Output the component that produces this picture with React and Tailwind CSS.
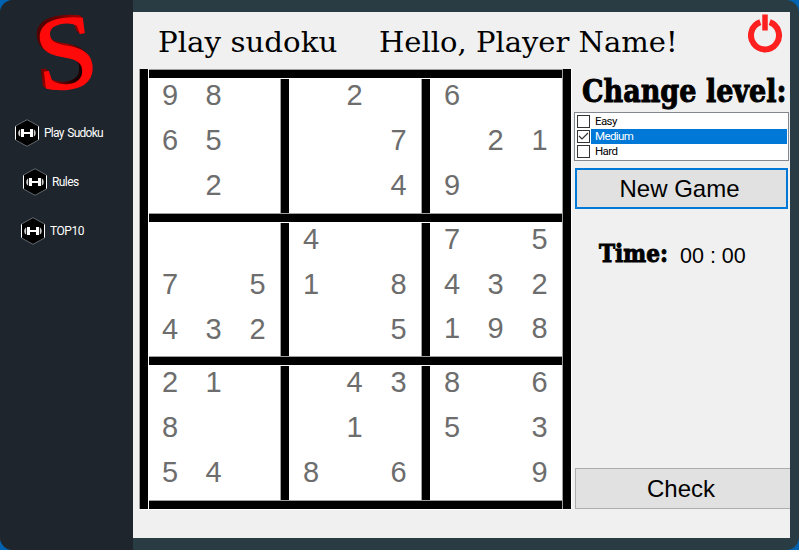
import React from 'react';

const rows = [
  ['98  2 6  ', '65   7 21', ' 2   49  '],
  ['   4  7 5', '7 51 8432', '432  5198'],
  ['21  438 6', '8   1 5 3', '54 8 6  9'],
];

const Block = ({ cells, compact }) => (
  <div
    className={`grid w-[131px] grid-cols-[42px_45px_43px] content-start text-[29px] leading-[32px] text-[#6d6d6d] ${
      compact ? 'grid-rows-[45px_44px_44px]' : 'auto-rows-[45px]'
    }`}
  >
    {cells.map((c, i) => (
      <span key={i} className="text-center">{c.trim()}</span>
    ))}
  </div>
);

const VBar = () => <div className="w-[9px] shrink-0 border-l border-[#a0a0a0] bg-black" />;
const HBar = () => <div className="mb-px h-[9px] shrink-0 border-t border-[#a0a0a0] bg-black" />;

const Board = () => (
  <div className="flex h-[441px] w-[433px] bg-white pb-px">
    <VBar />
    <div className="ml-px flex w-[413px] flex-col">
      <HBar />
      {rows.map((band, b) => (
        <React.Fragment key={b}>
          <div className={b === 1 ? 'flex h-[133px]' : 'flex h-[134px]'}>
            {[0, 3, 6].map((s) => (
              <React.Fragment key={s}>
                {s > 0 && <div className="mr-px flex"><VBar /></div>}
                <Block
                  cells={band.flatMap((r) => r.slice(s, s + 3).split(''))}
                  compact={b === 1 && s === 6}
                />
              </React.Fragment>
            ))}
          </div>
          <HBar />
        </React.Fragment>
      ))}
    </div>
    <VBar />
  </div>
);

const Logo = () => (
  <svg className="block h-[110px] w-[133px] overflow-visible" viewBox="0 0 133 110" role="img">
    <defs>
      <linearGradient id="side" x1="0" y1="0" x2="1" y2="1">
        <stop offset="0" stopColor="#300000" />
        <stop offset=".35" stopColor="#6a0000" />
        <stop offset=".5" stopColor="#a00000" />
        <stop offset=".7" stopColor="#180000" />
        <stop offset="1" stopColor="#700000" />
      </linearGradient>
    </defs>
    {[5, 4, 3, 2, 1, 0].map((d) => (
      <text
        key={d}
        transform={`translate(${39.5 - d * 0.6} ${91.5 - d * 0.5}) rotate(-7) scale(1.06 1)`}
        fontFamily="Liberation Serif, serif"
        fontSize="105"
        fill={d ? 'url(#side)' : '#ff0a0a'}
        stroke={d ? 'url(#side)' : '#ff0a0a'}
        strokeWidth="1.5"
      >
        S
      </text>
    ))}
  </svg>
);

const Dumbbell = () => (
  <svg className="h-7 w-6 shrink-0" viewBox="0 0 24 28">
    <path d="M12 .7 23.5 7v14L12 27.3.5 21V7Z" fill="#000" stroke="#777e83" strokeWidth=".8" />
    <path d="M.5 7.5v13M23.5 7.5v13" stroke="#fff" />
    <path d="M8 13h8v2H8zM6 10h3v8H6zM15 10h3v8h-3z" fill="#fff" />
    <path d="M5.2 10.5v7c-2.6-1-2.6-6 0-7M18.8 10.5v7c2.6-1 2.6-6 0-7" fill="#ccc" />
  </svg>
);

const NavItem = ({ label, className }) => (
  <div className={`flex h-[49px] items-start gap-[5px] text-[12px] leading-[28px] whitespace-nowrap text-white ${className}`}>
    <Dumbbell />
    <span>{label}</span>
  </div>
);

const Level = ({ label, checked }) => (
  <div className="flex h-[15px] items-start gap-px text-[11.5px] leading-[15px] tracking-[-0.6px]">
    <span className="mt-px flex h-[13px] w-[13px] items-center justify-center border border-[#333] bg-white">
      {checked && (
        <svg className="h-[11px] w-[11px]" viewBox="0 0 11 11" fill="none" stroke="#333" strokeWidth="1.2">
          <path d="m1 5 3 3 6-6" />
        </svg>
      )}
    </span>
    <span className={checked ? 'h-[15px] flex-1 bg-[#0078d7] pl-1 text-white' : 'h-[15px] flex-1 pl-1 text-black'}>
      {label}
    </span>
  </div>
);

export default function App() {
  return (
    <div className="h-[550px] w-[799px] bg-[#0063b1] font-['Liberation_Sans',Arial,sans-serif] text-black">
      <div className="flex h-full overflow-hidden rounded-[13px] bg-[#293c44]">
        <aside className="w-[133px] shrink-0 bg-[#1e252c] font-[Roboto,sans-serif]">
          <Logo />
          <nav className="pt-[9px]">
            <NavItem label="Play Sudoku" className="pl-[15px] tracking-[-0.75px] [word-spacing:1.5px]" />
            <NavItem label="Rules" className="pl-[23px] tracking-[-0.6px]" />
            <NavItem label="TOP10" className="pl-[21px] tracking-[-0.45px]" />
          </nav>
        </aside>
        <main className="mt-3 flex h-[526px] w-[657px] flex-col overflow-hidden bg-[#f0f0f0]">
          <header className="flex h-[57px] shrink-0 items-start font-['DejaVu_Serif',serif] text-[27px] leading-[61px] whitespace-nowrap">
            <span className="w-[221px] pl-[25px]">
              <span className="inline-block origin-left scale-x-[1.085]">Play sudoku</span>
            </span>
            <span className="w-[394px] pl-[25px]">
              <span className="inline-block origin-left scale-x-[1.074]">Hello, Player Name!</span>
            </span>
            <svg className="mt-px h-[40px] w-[36px] shrink-0" viewBox="0 0 36 40" fill="none" stroke="#ff2020">
              <path d="M12.3 9.2A14 14 0 1 0 21.7 9.2" strokeWidth="6" />
              <path d="M17 1.5v16" strokeWidth="5.5" />
            </svg>
          </header>
          <div className="flex pl-[6px]">
            <Board />
            <section className="flex h-[440px] w-[218px] shrink-0 flex-col pl-[2px]">
              <h1 className="h-[42px] pl-2 font-['DejaVu_Serif',serif] text-[32px] leading-[44px] font-bold whitespace-nowrap">
                <span className="inline-block origin-left scale-x-[0.845] [-webkit-text-stroke:1px_black]">Change level:</span>
              </h1>
              <div className="mt-px h-[49px] w-[215px] border border-[#828790] bg-white p-px pl-[2px] font-[Roboto,sans-serif]">
                <Level label="Easy" />
                <Level label="Medium" checked />
                <Level label="Hard" />
              </div>
              <button className="mt-[7px] ml-px h-[41px] w-[213px] border-2 border-[#0078d7] bg-[#e1e1e1] pr-1 text-[24px] leading-[38px]">
                New Game
              </button>
              <div className="mt-[26px] flex h-[38px] items-center pl-[25px] whitespace-nowrap">
                <span className="w-[81px] font-['DejaVu_Serif',serif] text-[25px] font-bold">
                  <span className="inline-block origin-left scale-x-[0.865] [-webkit-text-stroke:1px_black]">Time:</span>
                </span>
                <span className="pt-[4px] text-[21.5px]">00 : 00</span>
              </div>
              <button className="mt-auto ml-px h-[41px] w-[220px] shrink-0 border border-[#adadad] bg-[#e1e1e1] pr-[8px] text-[24px] leading-[39px]">
                Check
              </button>
            </section>
          </div>
        </main>
      </div>
    </div>
  );
}
